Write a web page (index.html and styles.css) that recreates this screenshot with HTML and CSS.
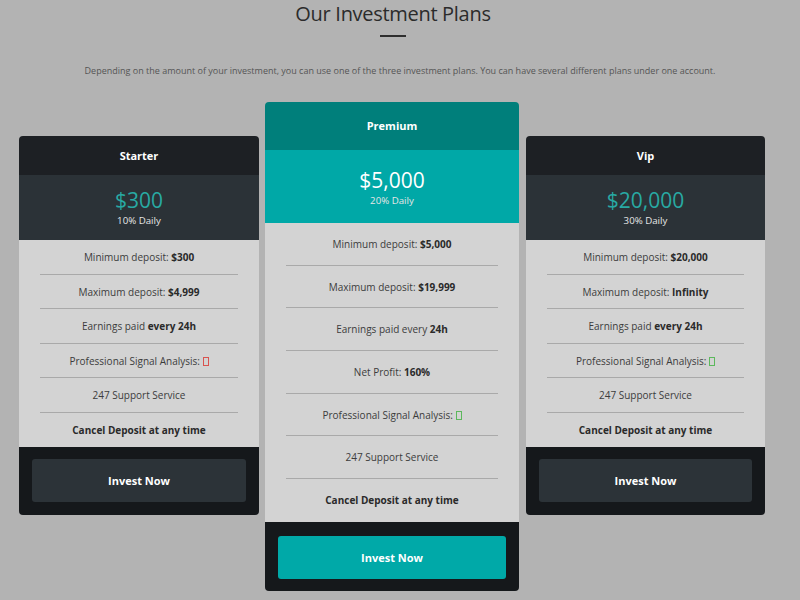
FILE: index.html
```html
<!DOCTYPE html>
<html lang="en">
<head>
<meta charset="utf-8">
<title>Our Investment Plans</title>
<link rel="stylesheet" href="styles.css">
</head>
<body>
<section class="plans">
  <h2 class="title">Our Investment Plans</h2>
  <div class="title-bar"></div>
  <p class="intro">Depending on the amount of your investment, you can use one of the three investment plans. You can have several different plans under one account.</p>
  <div class="cards">
    <div class="card card-side">
      <div class="card-head">Starter</div>
      <div class="card-price">
        <div class="amount">$300</div>
        <div class="rate">10% Daily</div>
      </div>
      <ul class="features">
        <li>Minimum deposit: <b>$300</b></li>
        <li>Maximum deposit: <b>$4,999</b></li>
        <li>Earnings paid <b>every 24h</b></li>
        <li>Professional Signal Analysis: <span class="tofu tofu-no"></span></li>
        <li>247 Support Service</li>
        <li><b>Cancel Deposit at any time</b></li>
      </ul>
      <div class="card-foot"><a class="btn" href="#">Invest Now</a></div>
    </div>
    <div class="card card-main">
      <div class="card-head">Premium</div>
      <div class="card-price">
        <div class="amount">$5,000</div>
        <div class="rate">20% Daily</div>
      </div>
      <ul class="features">
        <li>Minimum deposit: <b>$5,000</b></li>
        <li>Maximum deposit: <b>$19,999</b></li>
        <li>Earnings paid every <b>24h</b></li>
        <li>Net Profit: <b>160%</b></li>
        <li>Professional Signal Analysis: <span class="tofu tofu-yes"></span></li>
        <li>247 Support Service</li>
        <li><b>Cancel Deposit at any time</b></li>
      </ul>
      <div class="card-foot"><a class="btn" href="#">Invest Now</a></div>
    </div>
    <div class="card card-side card-vip">
      <div class="card-head">Vip</div>
      <div class="card-price">
        <div class="amount">$20,000</div>
        <div class="rate">30% Daily</div>
      </div>
      <ul class="features">
        <li>Minimum deposit: <b>$20,000</b></li>
        <li>Maximum deposit: <b>Infinity</b></li>
        <li>Earnings paid <b>every 24h</b></li>
        <li>Professional Signal Analysis: <span class="tofu tofu-yes"></span></li>
        <li>247 Support Service</li>
        <li><b>Cancel Deposit at any time</b></li>
      </ul>
      <div class="card-foot"><a class="btn" href="#">Invest Now</a></div>
    </div>
  </div>
</section>
</body>
</html>
```
FILE: styles.css
```css
html, body {
  margin: 0;
  padding: 0;
  background: #b3b3b3;
}
body {
  font-family: "Open Sans", "Noto Sans", sans-serif;
  color: #3c3c3c;
  overflow: hidden;
}
.plans {
  width: 800px;
  height: 600px;
}
.title {
  margin: 0;
  padding: 1px 14px 0 0;
  font-size: 20px;
  line-height: 25px;
  font-weight: 400;
  letter-spacing: -0.3px;
  text-align: center;
  color: #2b2b2b;
}
.title-bar {
  width: 26px;
  height: 2px;
  background: #2e2e2e;
  margin: 9px 0 0 380px;
}
.intro {
  margin: 27px 0 0;
  font-size: 9px;
  line-height: 13px;
  text-align: center;
  color: #555;
}
.cards {
  display: flex;
  align-items: flex-start;
  gap: 6px;
  margin-top: 25px;
  padding-left: 19px;
}
.card {
  border-radius: 4px;
  overflow: hidden;
  display: flex;
  flex-direction: column;
}
.card-side {
  width: 240px;
  margin-top: 34px;
}
.card-vip {
  width: 239px;
  margin-left: 1px;
}
.card-main {
  width: 254px;
}
.card-head {
  color: #fff;
  font-weight: 700;
  font-size: 11px;
  text-align: center;
}
.card-side .card-head {
  background: #1d2024;
  height: 39px;
  line-height: 39px;
}
.card-main .card-head {
  background: #007f7b;
  height: 48px;
  line-height: 48px;
}
.card-price {
  text-align: center;
}
.card-side .card-price {
  background: #2b3237;
  height: 65px;
  padding-top: 14px;
  box-sizing: border-box;
}
.card-main .card-price {
  background: #00a8a7;
  height: 73px;
  padding-top: 19px;
  box-sizing: border-box;
}
.amount {
  font-size: 21px;
  line-height: 22px;
}
.card-side .amount {
  color: #28a9a3;
}
.card-main .amount {
  color: #fff;
}
.rate {
  margin-top: 4px;
  font-size: 9.7px;
  line-height: 12px;
  color: #e6e6e6;
}
.features {
  list-style: none;
  margin: 0;
  padding: 0 21px;
  background: #d3d3d3;
  font-size: 10px;
  text-align: center;
}
.features li {
  box-sizing: border-box;
  border-bottom: 1px solid #a9a9a9;
}
.features li:last-child {
  border-bottom: 0;
}
.features b {
  color: #2a2a2a;
}
.card-side .features li {
  height: 34.6px;
  line-height: 34px;
}
.card-side .features {
  height: 207px;
}
.card-main .features li {
  height: 42.7px;
  line-height: 42px;
}
.card-main .features {
  height: 299px;
}
.tofu {
  display: inline-block;
  width: 4px;
  height: 7px;
  border: 1px solid;
  vertical-align: -1px;
}
.tofu-no {
  border-color: #d9534f;
}
.tofu-yes {
  border-color: #5cb85c;
}
.card-foot {
  background: #15181b;
}
.card-side .card-foot {
  height: 68px;
  padding: 12px 13px 0;
  box-sizing: border-box;
}
.card-main .card-foot {
  height: 69px;
  padding: 14px 13px 0;
  box-sizing: border-box;
}
.btn {
  display: block;
  height: 43px;
  line-height: 43px;
  border-radius: 3px;
  text-align: center;
  color: #fff;
  font-weight: 700;
  font-size: 11px;
  text-decoration: none;
}
.card-side .btn {
  background: #2c3338;
}
.card-main .btn {
  background: #00a9a8;
}
```
